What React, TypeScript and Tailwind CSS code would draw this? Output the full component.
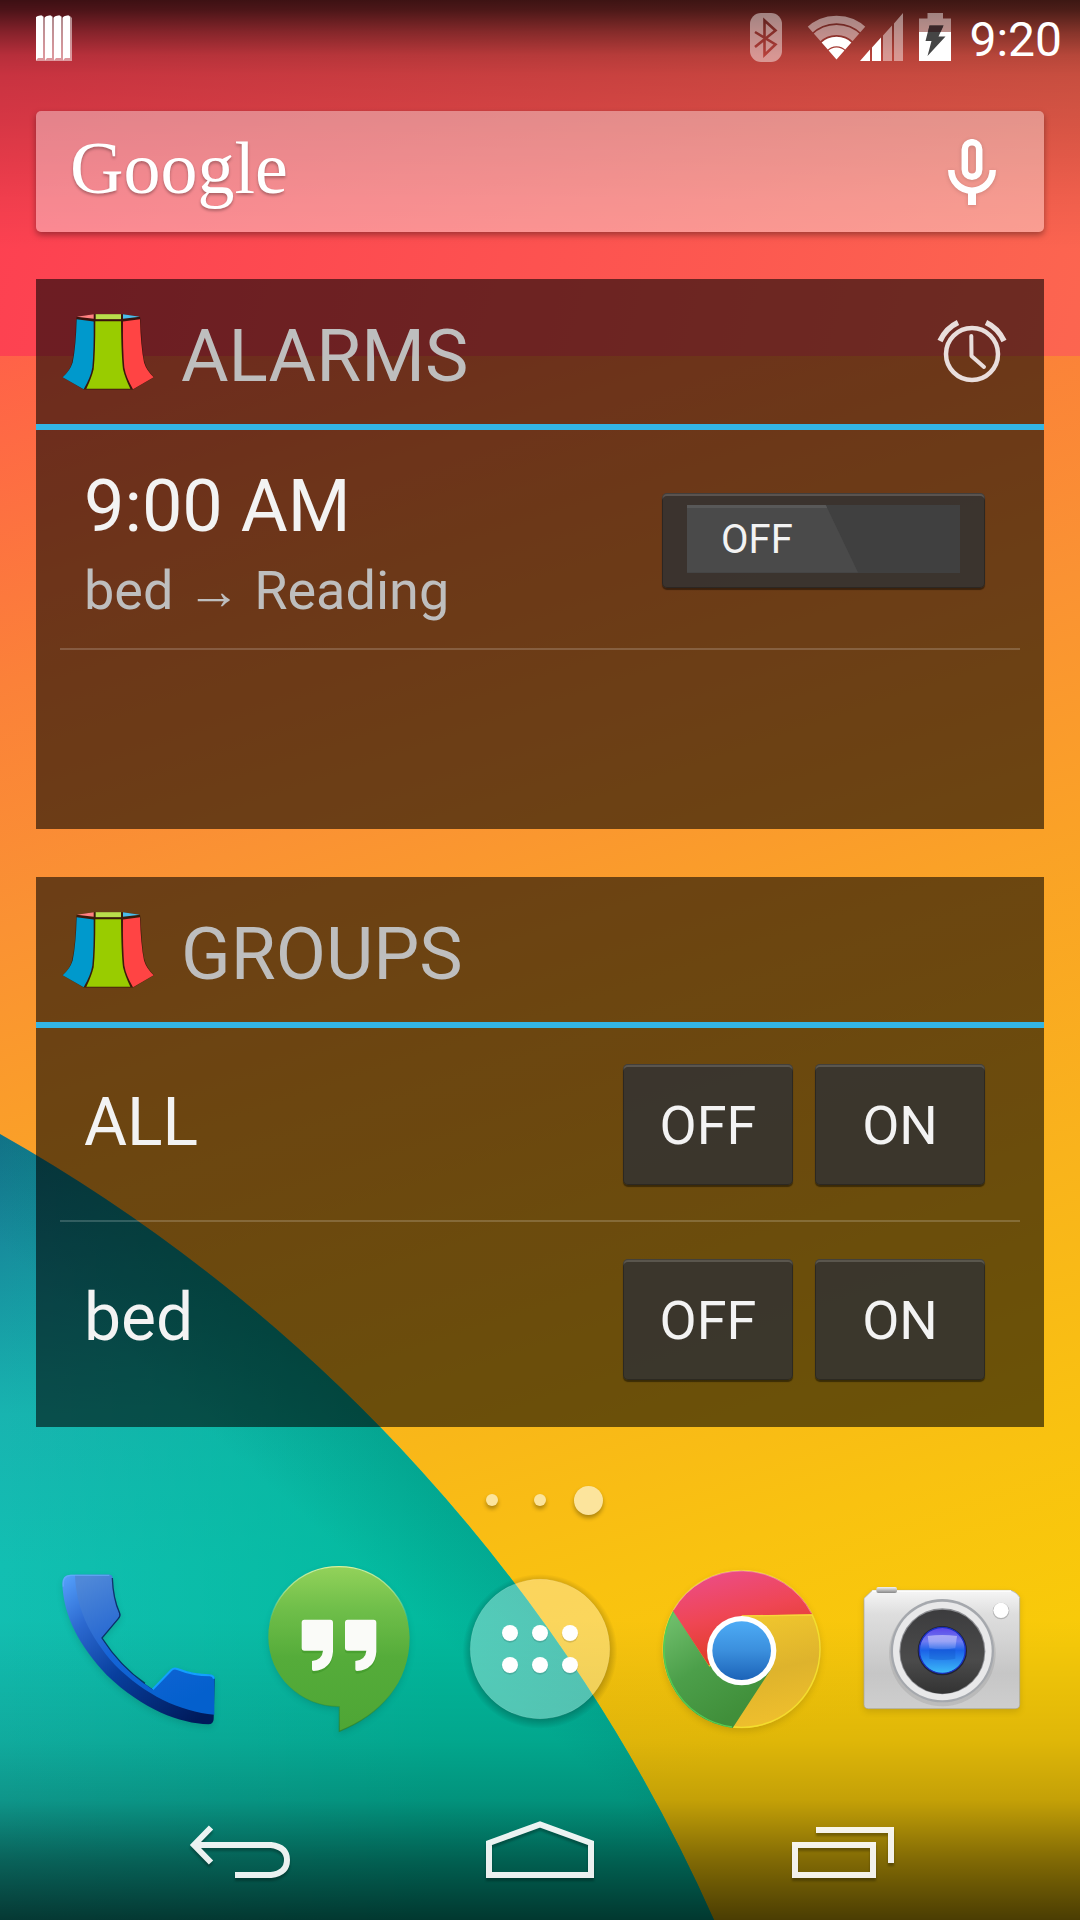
import React, { useState } from "react";

function Wallpaper() {
  return (
    <svg
      className="absolute inset-0 h-full w-full"
      viewBox="0 0 1080 1920"
      preserveAspectRatio="none"
      aria-hidden="true"
    >
      <defs>
        <linearGradient id="wRed" gradientUnits="userSpaceOnUse" x1="0" y1="100" x2="1080" y2="400">
          <stop offset="0" stopColor="#fd4051" />
          <stop offset="0.5" stopColor="#fd5250" />
          <stop offset="1" stopColor="#fc6650" />
        </linearGradient>
        <linearGradient id="wOrange" gradientUnits="userSpaceOnUse" x1="0" y1="356" x2="493" y2="1836">
          <stop offset="0" stopColor="#ff6248" />
          <stop offset="0.2" stopColor="#fb8139" />
          <stop offset="0.35" stopColor="#fa9233" />
          <stop offset="0.5" stopColor="#faa127" />
          <stop offset="0.7" stopColor="#f9b31c" />
          <stop offset="0.87" stopColor="#f9c210" />
          <stop offset="1" stopColor="#f8cb09" />
        </linearGradient>
        <linearGradient id="wTeal" gradientUnits="userSpaceOnUse" x1="0" y1="1130" x2="0" y2="1920">
          <stop offset="0" stopColor="#15708c" />
          <stop offset="0.14" stopColor="#178b9c" />
          <stop offset="0.36" stopColor="#18b4b0" />
          <stop offset="0.55" stopColor="#12bfb2" />
          <stop offset="1" stopColor="#12bcac" />
        </linearGradient>
        <linearGradient id="wGreen" gradientUnits="userSpaceOnUse" x1="0" y1="0" x2="440" y2="0">
          <stop offset="0" stopColor="#00b99b" stopOpacity="0" />
          <stop offset="1" stopColor="#00b99b" stopOpacity="0.9" />
        </linearGradient>
        <linearGradient id="wEdge" gradientUnits="userSpaceOnUse" x1="410" y1="1450" x2="330" y2="1540">
          <stop offset="0" stopColor="#04786f" stopOpacity="0.3" />
          <stop offset="1" stopColor="#04786f" stopOpacity="0" />
        </linearGradient>
        <linearGradient id="wTop" x1="0" y1="0" x2="0" y2="1">
          <stop offset="0" stopColor="#000" stopOpacity="0.76" />
          <stop offset="0.04" stopColor="#000" stopOpacity="0.7" />
          <stop offset="0.13" stopColor="#000" stopOpacity="0.47" />
          <stop offset="0.22" stopColor="#000" stopOpacity="0.28" />
          <stop offset="0.3" stopColor="#000" stopOpacity="0.21" />
          <stop offset="0.5" stopColor="#000" stopOpacity="0.15" />
          <stop offset="0.8" stopColor="#000" stopOpacity="0.05" />
          <stop offset="1" stopColor="#000" stopOpacity="0" />
        </linearGradient>
        <linearGradient id="wBottom" x1="0" y1="0" x2="0" y2="1">
          <stop offset="0" stopColor="#000" stopOpacity="0" />
          <stop offset="0.4" stopColor="#000" stopOpacity="0.1" />
          <stop offset="0.6" stopColor="#000" stopOpacity="0.21" />
          <stop offset="0.8" stopColor="#000" stopOpacity="0.48" />
          <stop offset="1" stopColor="#000" stopOpacity="0.7" />
        </linearGradient>
      </defs>
      <rect width="1080" height="356" fill="url(#wRed)" />
      <rect y="356" width="1080" height="1564" fill="url(#wOrange)" />
      <path d="M0 1134A1695.5 1695.5 0 0 1 714 1920H0Z" fill="url(#wTeal)" />
      <path d="M0 1134A1695.5 1695.5 0 0 1 714 1920H0Z" fill="url(#wGreen)" />
      <path d="M0 1134A1695.5 1695.5 0 0 1 714 1920H0Z" fill="url(#wEdge)" />
      <rect width="1080" height="250" fill="url(#wTop)" />
      <rect y="1620" width="1080" height="300" fill="url(#wBottom)" />
    </svg>
  );
}

function NotificationIcon() {
  return (
    <svg className="h-[46px] w-9" viewBox="0 0 36 46" aria-hidden="true">
      {[0, 9, 18, 27].map((x) => (
        <g key={x}>
          <path d={`M${x + 1} 2Q${x + 3} 0 ${x + 7} 1L${x + 9} 3V46H${x}Z`} fill="#fff" opacity="0.5" />
          <path d={`M${x} 2Q${x + 2} 0 ${x + 6} 0.5L${x + 7} 2V43H${x + 2}L${x} 45.5Z`} fill="#fff" />
        </g>
      ))}
    </svg>
  );
}

function StatusIcons() {
  return (
    <svg className="h-[50px] w-[202px]" viewBox="750 12 202 50" aria-label="Bluetooth, Wi-Fi, signal, charging" role="img">
      <defs>
        <mask id="btMask">
          <rect x="750" y="12" width="32" height="49" rx="11" fill="#fff" />
          <path d="M755 31L775.5 43.5L764.5 54V19.5L775.5 29.5L755 46" fill="none" stroke="#000" strokeWidth="2.6" />
        </mask>
        <clipPath id="wifiClip">
          <path d="M836.5 58.5L798 14.5V5H875V14.5Z" />
        </clipPath>
      </defs>
      <rect x="750" y="12" width="32" height="49" fill="#fff" opacity="0.45" mask="url(#btMask)" />
      <g clipPath="url(#wifiClip)" fill="none" stroke="#fff">
        <circle cx="836.5" cy="58.5" r="40" strokeWidth="7.5" opacity="0.45" />
        <circle cx="836.5" cy="58.5" r="29.5" strokeWidth="10" opacity="0.45" />
        <circle cx="836.5" cy="58.5" r="18" strokeWidth="9.5" />
        <circle cx="836.5" cy="58.5" r="6" strokeWidth="12" />
      </g>
      <path d="M860 60L870 48.5V60ZM872 60V46.5L881 36.5V60Z" fill="#fff" />
      <path d="M883 60V34.5L892 24.5V60ZM894 60V22.5L903 12V60Z" fill="#fff" opacity="0.45" />
      <path d="M919 31V17.500H927.500V12H943V17.500H951V31Z" fill="#fff" opacity="0.45" />
      <path d="M919 31H951V60H919Z" fill="#fff" />
      <path d="M929.500 24.500H943.500L938.500 35.500H945.500L927.500 55L931.500 40H925.500Z" fill="#454545" />
      <path d="M929.500 24.500H943.500L940.500 31H928Z" fill="#3a2729" />
    </svg>
  );
}

function MicIcon() {
  return (
    <svg className="h-[66px] w-12 drop-shadow-sm" viewBox="948 138 48 66" fill="none" stroke="#fff" strokeWidth="6.500" aria-hidden="true">
      <rect x="964.800" y="141.200" width="14.400" height="34.600" rx="7.200" />
      <path d="M951.300 169a20.700 20.700 0 0 0 41.400 0" />
      <path d="M972 190V204" strokeWidth="8" />
    </svg>
  );
}

function AppLogo() {
  return (
    <svg className="h-[77px] w-[92px] shrink-0" viewBox="36 42 276 230" aria-hidden="true">
      <path
        d="M80 53L131 45H219L270 53L272 66Q276 160 284 190Q292 215 312 234L249 271H101L38 234Q60 215 66 190Q77 140 78 66Z"
        fill="#2a1005"
        opacity="0.75"
      />
      <path d="M80 60L131 67Q132 150 127 205Q122 235 101 270L38 234Q60 215 68 190Q78 140 80 60Z" fill="#0099cc" />
      <path d="M136 66H213Q214 170 219 210Q225 235 241 269H109Q125 235 131 210Q136 160 136 66Z" fill="#99cc00" />
      <path d="M270 60L219 67Q218 150 223 205Q228 235 249 270L311 234Q290 215 282 190Q272 140 270 60Z" fill="#ff4444" />
      <path d="M80 53L131 45V59Z" fill="#ff8080" />
      <path d="M137 45H213V60H137Z" fill="#b9de4c" />
      <path d="M270 53L219 45V59Z" fill="#4abdec" />
    </svg>
  );
}

function AlarmIcon() {
  return (
    <svg className="h-[68px] w-[72px]" viewBox="936 318 72 68" fill="none" stroke="#e9dedc" aria-hidden="true">
      <circle cx="972" cy="354" r="26" strokeWidth="4.500" />
      <path d="M971.300 336L971.500 356L984 367" strokeWidth="4" strokeLinecap="round" strokeLinejoin="round" />
      <path d="M940 341Q946 328 958 322.500M1004 341Q998 328 986 322.500" strokeWidth="5.500" />
    </svg>
  );
}

function Widget({ title, action, children }: { title: string; action?: React.ReactNode; children: React.ReactNode }) {
  return (
    <section className="min-h-[550px] bg-black/57">
      <header className="flex h-[151px] items-center border-b-6 border-[#33b5e5] pr-9 pl-[26px]">
        <AppLogo />
        <h2 className="flex-1 pt-2 pl-[27px] text-[73px] leading-[84px] text-[#bebebe]">{title}</h2>
        {action}
      </header>
      {children}
    </section>
  );
}

const BUTTON_FACE =
  "rounded-[5px] bg-[#333333]/85 shadow-[inset_0_0_0_1px_rgba(0,0,0,0.25),inset_0_3px_0_rgba(255,255,255,0.16),0_2px_1px_rgba(0,0,0,0.45)]";

function AlarmToggle() {
  const [on, setOn] = useState(false);
  return (
    <label className={`mt-[2px] block px-[25px] pt-3 pb-[15px] ${BUTTON_FACE}`}>
      <input
        type="checkbox"
        role="switch"
        aria-label="9:00 AM alarm"
        className="sr-only"
        checked={on}
        onChange={() => setOn(!on)}
      />
      <span className={`flex h-[68px] w-[273px] bg-[#404040] ${on ? "justify-end" : "justify-start"}`}>
        <span className="flex w-[171px] items-center border-t-3 border-[#585858] bg-[#4a4a4a] pl-[34px] text-[40px] leading-none text-[#f3f3f3] [clip-path:polygon(0_0,81%_0,100%_100%,0_100%)]">
          {on ? "ON" : "OFF"}
        </span>
      </span>
    </label>
  );
}

function GroupRow({ name }: { name: string }) {
  return (
    <li className="flex h-[194px] items-center gap-[22px] pr-[35px] pl-6">
      <span className="flex-1 pb-1 text-[66px] leading-[77px] text-[#f3f3f3]">{name}</span>
      {["OFF", "ON"].map((label) => (
        <button
          key={label}
          type="button"
          aria-label={`${name} ${label}`}
          className={`h-[121px] w-[170px] pt-1 text-[54px] leading-[64px] text-[#f3f3f3] ${BUTTON_FACE}`}
        >
          {label}
        </button>
      ))}
    </li>
  );
}

function PhoneIcon() {
  return (
    <svg viewBox="54 57 540 540" className="h-[180px] w-[180px] drop-shadow-md" aria-hidden="true">
      <defs>
        <linearGradient id="phSide" gradientUnits="userSpaceOnUse" x1="110" y1="104" x2="480" y2="560">
          <stop offset="0" stopColor="#55a0fb" />
          <stop offset="0.25" stopColor="#2b68cf" />
          <stop offset="0.55" stopColor="#083f9e" />
          <stop offset="1" stopColor="#001a5a" />
        </linearGradient>
        <linearGradient id="phFront" gradientUnits="userSpaceOnUse" x1="190" y1="104" x2="400" y2="520">
          <stop offset="0" stopColor="#4f88d8" />
          <stop offset="0.38" stopColor="#2a6bd2" />
          <stop offset="0.5" stopColor="#1565d8" />
          <stop offset="1" stopColor="#0460cd" />
        </linearGradient>
      </defs>
      <path
        d="M97 130Q97 105 122 104H238Q247 104 248 114Q250 175 270 218Q274 228 266 237L216 294Q275 385 368 448L424 390Q432 381 442 386Q490 404 540 404Q554 406 554 418L551 538Q550 553 535 553C450 550 340 510 230 405C150 320 100 230 97 130Z"
        fill="url(#phSide)"
      />
      <path
        d="M135 104H238Q245 104 246 114Q248 175 268 220Q270 228 264 235L214 294Q275 387 368 449L424 390Q432 383 442 387Q490 406 540 406Q553 408 553 418V524C450 515 345 465 255 375C175 285 138 200 135 104Z"
        fill="url(#phFront)"
      />
      <path d="M368 448L424 390Q432 383 442 387Q490 406 540 406Q550 407 552 416" fill="none" stroke="#12a0ff" strokeWidth="6" />
      <path d="M247 114Q249 175 269 220Q272 228 265 236L216 294Q270 378 345 430" fill="none" stroke="#062352" strokeWidth="4" opacity="0.8" />
      <path d="M100 140Q97 106 122 106H238" fill="none" stroke="#67aefc" strokeWidth="4" opacity="0.7" />
    </svg>
  );
}

function HangoutsIcon() {
  const quote =
    "M823 239H901Q909 239 909 248V335Q905 388 851 393Q846 393 846 388V363Q877 359 879 332H823Q815 332 815 323V248Q815 239 823 239Z";
  return (
    <svg viewBox="657 57 540 540" className="h-[180px] w-[180px] drop-shadow-md" aria-hidden="true">
      <defs>
        <linearGradient id="hgBody" x1="0" y1="0" x2="0" y2="1">
          <stop offset="0" stopColor="#93d25a" />
          <stop offset="0.25" stopColor="#70bf4a" />
          <stop offset="0.55" stopColor="#55ac3a" />
          <stop offset="1" stopColor="#4ea635" />
        </linearGradient>
        <linearGradient id="hgRim" x1="0" y1="0" x2="0" y2="1">
          <stop offset="0" stopColor="#d9f09b" />
          <stop offset="0.35" stopColor="#d9f09b" stopOpacity="0" />
          <stop offset="0.7" stopColor="#2e7a20" stopOpacity="0" />
          <stop offset="1" stopColor="#2e7a20" stopOpacity="0.6" />
        </linearGradient>
      </defs>
      <path
        d="M927 80C809 80 715 174 715 291C715 407 810 500 928 500V574C1050 525 1139 430 1139 292C1139 174 1045 80 927 80Z"
        fill="url(#hgBody)"
        stroke="url(#hgRim)"
        strokeWidth="4"
      />
      <g transform="translate(0 8)" fill="#2f8a1c" opacity="0.35">
        <path d={quote} />
        <path d={quote} transform="translate(130 0)" />
      </g>
      <g fill="#fafbf8">
        <path d={quote} />
        <path d={quote} transform="translate(130 0)" />
      </g>
    </svg>
  );
}

function DrawerIcon() {
  return (
    <svg viewBox="30 297 540 540" className="h-[180px] w-[180px]" aria-hidden="true">
      <defs>
        <radialGradient id="drShadow" cx="300" cy="574" r="232" gradientUnits="userSpaceOnUse">
          <stop offset="0.88" stopColor="#000" stopOpacity="0.22" />
          <stop offset="1" stopColor="#000" stopOpacity="0" />
        </radialGradient>
        <mask id="drMask">
          <rect x="30" y="297" width="540" height="540" fill="#fff" />
          <circle cx="300" cy="567" r="209" fill="#000" />
        </mask>
      </defs>
      <circle cx="300" cy="574" r="232" fill="url(#drShadow)" mask="url(#drMask)" />
      <circle cx="300" cy="567" r="209" fill="#fff" fillOpacity="0.32" stroke="#fff" strokeOpacity="0.15" strokeWidth="3" />
      {[519, 615].map((y) =>
        [210, 300, 390].map((x) => (
          <g key={`${x}-${y}`}>
            <circle cx={x} cy={y + 4} r="25" fill="#000" opacity="0.12" />
            <circle cx={x} cy={y} r="24" fill="#fff" />
          </g>
        ))
      )}
    </svg>
  );
}

function ChromeIcon() {
  return (
    <svg viewBox="33 57 540 540" className="h-[180px] w-[180px] drop-shadow-md" aria-hidden="true">
      <defs>
        <linearGradient id="crRed" gradientUnits="userSpaceOnUse" x1="250" y1="90" x2="310" y2="350">
          <stop offset="0" stopColor="#ec4c84" />
          <stop offset="0.5" stopColor="#ef4654" />
          <stop offset="1" stopColor="#e03c26" />
        </linearGradient>
        <linearGradient id="crYellow" gradientUnits="userSpaceOnUse" x1="380" y1="230" x2="450" y2="540">
          <stop offset="0" stopColor="#efc52e" />
          <stop offset="0.5" stopColor="#deb32c" />
          <stop offset="1" stopColor="#efbf2d" />
        </linearGradient>
        <linearGradient id="crGreen" gradientUnits="userSpaceOnUse" x1="100" y1="220" x2="290" y2="520">
          <stop offset="0" stopColor="#70bf6c" />
          <stop offset="0.5" stopColor="#4c9f4a" />
          <stop offset="1" stopColor="#408f3a" />
        </linearGradient>
        <linearGradient id="crBlue" x1="0" y1="0" x2="0" y2="1">
          <stop offset="0" stopColor="#4dabf5" />
          <stop offset="0.5" stopColor="#3b8fdd" />
          <stop offset="1" stopColor="#1c63b8" />
        </linearGradient>
      </defs>
      <circle cx="305" cy="327" r="238" fill="url(#crYellow)" />
      <circle cx="305" cy="327" r="235" fill="none" stroke="#f4e02c" strokeWidth="4" />
      <path d="M100 211L208 380L305 332L395 385L278 564A237 237 0 0 1 100 211Z" fill="url(#crGreen)" />
      <path d="M276 561A235 235 0 0 1 101 215" fill="none" stroke="#52cf52" strokeWidth="4" />
      <path d="M99 213A237 237 0 0 1 517 223L305 227V332L206 376Z" fill="url(#crRed)" />
      <path d="M305 228L516 225" stroke="#f8d53b" strokeWidth="4" />
      <path d="M101 210A236 236 0 0 1 514 220" fill="none" stroke="#f59ab8" strokeWidth="3" opacity="0.6" />
      <circle cx="305" cy="332" r="104" fill="#fff" />
      <circle cx="305" cy="332" r="88" fill="url(#crBlue)" />
    </svg>
  );
}

function CameraIcon() {
  return (
    <svg viewBox="636 57 540 540" className="h-[180px] w-[180px] drop-shadow-md" aria-hidden="true">
      <defs>
        <linearGradient id="cmBody" x1="0" y1="0" x2="0" y2="1">
          <stop offset="0" stopColor="#f6f6f6" />
          <stop offset="0.2" stopColor="#dedede" />
          <stop offset="0.7" stopColor="#c6c6c6" />
          <stop offset="1" stopColor="#cecece" />
        </linearGradient>
        <linearGradient id="cmKnob" x1="0" y1="0" x2="0" y2="1">
          <stop offset="0" stopColor="#f2f2f2" />
          <stop offset="1" stopColor="#888" />
        </linearGradient>
        <linearGradient id="cmDark" x1="0" y1="0" x2="0" y2="1">
          <stop offset="0" stopColor="#3c3c3e" />
          <stop offset="0.6" stopColor="#4b4b4b" />
          <stop offset="1" stopColor="#333" />
        </linearGradient>
        <linearGradient id="cmLens" x1="0" y1="0" x2="0" y2="1">
          <stop offset="0" stopColor="#5c45e8" />
          <stop offset="0.3" stopColor="#6f7cf2" />
          <stop offset="0.5" stopColor="#1b62e8" />
          <stop offset="1" stopColor="#3dbcf8" />
        </linearGradient>
        <linearGradient id="cmGlint" x1="0" y1="0" x2="0" y2="1">
          <stop offset="0" stopColor="#fff" stopOpacity="0.45" />
          <stop offset="1" stopColor="#fff" stopOpacity="0.12" />
        </linearGradient>
      </defs>
      <path d="M697 151H1113Q1132 158 1139 172V493Q1139 506 1126 506H685Q672 506 672 493V175Z" fill="url(#cmBody)" stroke="#a3a3a3" strokeWidth="2" />
      <path d="M697 153H1113" stroke="#fff" strokeWidth="4" />
      <rect x="709" y="141" width="62" height="18" rx="6" fill="url(#cmKnob)" />
      <circle cx="1083" cy="213" r="25" fill="#b5b5b5" />
      <circle cx="1083" cy="211" r="23" fill="#fff" />
      <circle cx="907" cy="339" r="160" fill="#777" opacity="0.2" />
      <circle cx="907" cy="332" r="155" fill="#a5a8ad" />
      <circle cx="907" cy="333" r="148" fill="#e8e8e9" />
      <circle cx="907" cy="334" r="129" fill="#8b8c90" />
      <circle cx="907" cy="335" r="126" fill="url(#cmDark)" />
      <circle cx="907" cy="332" r="74" fill="#20232e" />
      <circle cx="907" cy="331" r="69" fill="url(#cmLens)" stroke="#1a2fc4" strokeWidth="4" />
      <path d="M863 288Q907 282 951 288L946 324Q907 332 868 324Z" fill="url(#cmGlint)" />
      <path d="M868 328H946V356Q907 364 868 356Z" fill="#0d4fc0" opacity="0.3" />
    </svg>
  );
}

const DOCK = [
  { label: "Phone", icon: <PhoneIcon /> },
  { label: "Hangouts", icon: <HangoutsIcon /> },
  { label: "All apps", icon: <DrawerIcon /> },
  { label: "Chrome", icon: <ChromeIcon /> },
  { label: "Camera", icon: <CameraIcon /> },
];

const NAV_ICON = "h-[60px] w-[110px] drop-shadow-[0_3px_1px_rgba(0,0,0,0.3)]";

const NAV = [
  {
    label: "Back",
    icon: (
      <svg className={NAV_ICON} viewBox="183 1820 110 60" fill="none" stroke="#fff" strokeOpacity="0.92" strokeWidth="6" aria-hidden="true">
        <path d="M211 1827.500L194 1845L211 1862.500M194 1845H271Q287 1847 287 1860Q287 1873 271 1875H235" />
      </svg>
    ),
  },
  {
    label: "Home",
    icon: (
      <svg className={NAV_ICON} viewBox="485 1820 110 60" fill="none" stroke="#fff" strokeOpacity="0.92" strokeWidth="6" aria-hidden="true">
        <path d="M489 1843L540 1824.500L591 1843V1875H489Z" />
      </svg>
    ),
  },
  {
    label: "Recent apps",
    icon: (
      <svg className={NAV_ICON} viewBox="787 1820 110 60" fill="none" stroke="#fff" strokeOpacity="0.92" strokeWidth="6" aria-hidden="true">
        <path d="M795 1845H873V1875H795ZM816 1830H891V1863" />
      </svg>
    ),
  },
];

export default function App() {
  return (
    <div className="relative flex min-h-screen flex-col overflow-hidden font-['Roboto','Noto_Sans',sans-serif]">
      <Wallpaper />
      <div className="relative flex flex-1 flex-col">
        <div className="flex h-[75px] items-center justify-between pr-[18px] pl-9">
          <NotificationIcon />
          <div className="flex items-center gap-[17px]">
            <StatusIcons />
            <time className="pt-1 text-[48px] leading-[56px] text-white">9:20</time>
          </div>
        </div>

        <main className="flex flex-col px-9 pt-9">
          <div className="flex h-[121px] items-center justify-between rounded-[5px] bg-white/38 pr-12 pl-[34px] shadow-[0_3px_6px_rgba(0,0,0,0.35)]">
            <button
              type="button"
              aria-label="Google search"
              className="flex-1 pb-2 text-left font-['Liberation_Serif',serif] text-[74px] leading-[84px] text-white [text-shadow:0_2px_3px_rgba(0,0,0,0.3)]"
            >
              Google
            </button>
            <button type="button" aria-label="Voice search">
              <MicIcon />
            </button>
          </div>

          <div className="mt-[47px] flex flex-col gap-12">
            <Widget
              title="ALARMS"
              action={
                <button type="button" aria-label="Open alarms">
                  <AlarmIcon />
                </button>
              }
            >
              <ul className="px-6">
                <li className="flex h-[220px] items-center justify-between border-b-2 border-white/18 pr-[35px] pl-6">
                  <div className="flex flex-col gap-[10px] pt-[10px]">
                    <span className="text-[72px] leading-[84px] text-[#f3f3f3]">9:00 AM</span>
                    <span className="text-[54px] leading-[64px] text-[#bebebe]">
                      bed <span className="font-['Liberation_Serif',serif] leading-none">→</span> Reading
                    </span>
                  </div>
                  <AlarmToggle />
                </li>
              </ul>
            </Widget>

            <Widget title="GROUPS">
              <ul className="divide-y-2 divide-white/18 px-6">
                <GroupRow name="ALL" />
                <GroupRow name="bed" />
              </ul>
            </Widget>
          </div>
        </main>

        <div className="mt-[58px] flex h-[30px] items-center justify-center gap-9 pl-[9px]" aria-label="Page 3 of 3" role="img">
          <span className="size-3 rounded-full bg-[#fce49c] shadow-[0_3px_4px_rgba(0,0,0,0.3)]" />
          <span className="size-3 rounded-full bg-[#fce49c] shadow-[0_3px_4px_rgba(0,0,0,0.3)]" />
          <span className="-ml-2 size-[29px] rounded-full bg-[#fce49c] shadow-[0_3px_4px_rgba(0,0,0,0.3)]" />
        </div>

        <div className="mt-11 grid grid-cols-5 px-[37px]">
          {DOCK.map((app) => (
            <button key={app.label} type="button" aria-label={app.label} className="flex justify-center">
              {app.icon}
            </button>
          ))}
        </div>

        <nav className="mt-auto flex h-36 items-center justify-center gap-[192px] pt-1" aria-label="System">
          {NAV.map((item) => (
            <button key={item.label} type="button" aria-label={item.label}>
              {item.icon}
            </button>
          ))}
        </nav>
      </div>
    </div>
  );
}
